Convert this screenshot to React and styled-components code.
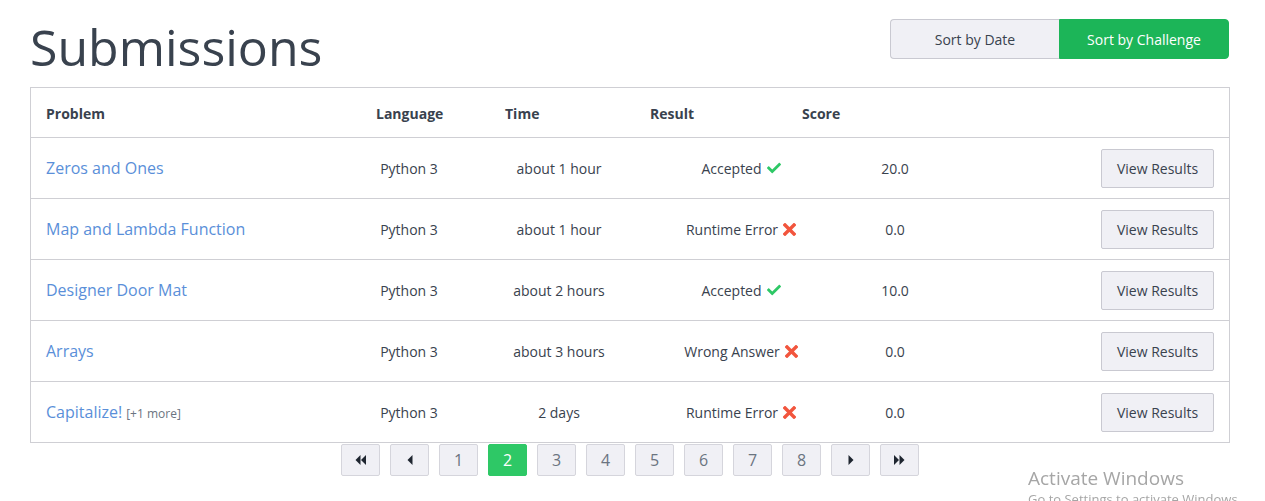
import React from 'react';
import styled, { createGlobalStyle } from 'styled-components';
import { FaCheck } from 'react-icons/fa';

const GlobalStyle = createGlobalStyle`
  html, body {
    margin: 0;
    padding: 0;
    background: #fff;
    font-family: "Open Sans", "Liberation Sans", sans-serif;
    color: #39424e;
  }
`;

const Page = styled.div`
  width: 1200px;
  margin-left: 30px;
`;

const TopBar = styled.div`
  display: flex;
  justify-content: space-between;
  align-items: flex-start;
  height: 87px;
`;

const Title = styled.h1`
  margin: 17px 0 0 0;
  font-size: 50px;
  font-weight: 400;
  line-height: 1.2;
  color: #39424e;
`;

const SortGroup = styled.div`
  display: flex;
  margin-top: 19px;
  margin-right: 1px;
`;

const SortButton = styled.button`
  width: ${p => (p.active ? '170px' : '169px')};
  height: 40px;
  font-family: inherit;
  font-size: 14px;
  border: 1px solid ${p => (p.active ? '#1cb558' : '#c9c9d1')};
  background: ${p => (p.active ? '#1cb558' : '#f0f0f5')};
  color: ${p => (p.active ? '#fff' : '#39424e')};
  border-radius: ${p => (p.active ? '0 4px 4px 0' : '4px 0 0 4px')};
  border-right: ${p => (p.active ? '1px solid #1cb558' : 'none')};
  cursor: pointer;
`;

const Table = styled.div`
  border: 1px solid #cfcfd4;
`;

const HeaderRow = styled.div`
  display: grid;
  grid-template-columns: 330px 129px 145px 152px 1fr;
  align-items: center;
  height: 49px;
  padding: 2px 0 0 15px;
  box-sizing: border-box;
  font-size: 14px;
  font-weight: 700;
  color: #39424e;
`;

const Row = styled.div`
  display: grid;
  grid-template-columns: 304px 118px 182px 182px 126px 1fr;
  align-items: center;
  height: 60px;
  padding: 0 15px;
  border-top: 1px solid #cfcfd4;
  font-size: 14px;
  color: #39424e;
`;

const Cell = styled.div`
  text-align: center;
  display: flex;
  justify-content: center;
  align-items: center;
  gap: 5px;
`;

const ProblemLink = styled.a`
  font-size: 16px;
  color: #5a8fd9;
  text-decoration: none;
  cursor: pointer;
`;

const More = styled.span`
  font-size: 12px;
  color: #6b7480;
  margin-left: 4px;
`;

const ActionCell = styled.div`
  display: flex;
  justify-content: flex-end;
`;

const ViewButton = styled.button`
  width: 113px;
  height: 39px;
  font-family: inherit;
  font-size: 14px;
  color: #39424e;
  background: #f0f0f5;
  border: 1px solid #c9c9d1;
  border-radius: 2px;
  cursor: pointer;
`;

const StatusIcon = styled.span`
  display: inline-flex;
  font-size: 14px;
  color: ${p => (p.ok ? '#2ec866' : '#f2553d')};
`;

const Pager = styled.div`
  display: flex;
  justify-content: center;
  gap: 10px;
  padding-top: 1px;
`;

const PageButton = styled.button`
  width: 39px;
  height: 32px;
  padding: 0;
  font-family: inherit;
  font-size: 16px;
  color: ${p => (p.active ? '#fff' : '#6b7480')};
  background: ${p => (p.active ? '#2ec866' : '#f0f0f5')};
  border: 1px solid ${p => (p.active ? '#2ec866' : '#d5d5dc')};
  border-radius: 2px;
  display: flex;
  align-items: center;
  justify-content: center;
  cursor: pointer;
`;

const Watermark = styled.div`
  position: fixed;
  left: 1028px;
  top: 466px;
  font-family: "Segoe UI", "Open Sans", sans-serif;
  color: #a6a6a6;
  pointer-events: none;
  line-height: 1.3;
  .big { font-size: 19px; }
  .small { font-size: 13px; white-space: nowrap; }
`;

const Cross = () => (
  <svg width="13" height="13" viewBox="0 0 13 13">
    <path d="M2 2 L11 11 M11 2 L2 11" stroke="currentColor" strokeWidth="3.4" strokeLinecap="square" />
  </svg>
);

const Arrow = ({ dir, double }) => {
  const tri = x =>
    dir === 'left'
      ? `M${x} 0 L${x} 10 L${x - 5} 5 Z`
      : `M${x} 0 L${x} 10 L${x + 5} 5 Z`;
  const w = double ? 11 : 6;
  return (
    <svg width={w} height="10" viewBox={`0 0 ${w} 10`} fill="#1f2630">
      {double ? (
        dir === 'left' ? (
          <>
            <path d={tri(5.5)} />
            <path d={tri(11)} />
          </>
        ) : (
          <>
            <path d={tri(0)} />
            <path d={tri(5.5)} />
          </>
        )
      ) : dir === 'left' ? (
        <path d={tri(5.5)} />
      ) : (
        <path d={tri(0.5)} />
      )}
    </svg>
  );
};

const submissions = [
  { name: 'Zeros and Ones', time: 'about 1 hour', result: 'Accepted', ok: true, score: '20.0' },
  { name: 'Map and Lambda Function', time: 'about 1 hour', result: 'Runtime Error', ok: false, score: '0.0' },
  { name: 'Designer Door Mat', time: 'about 2 hours', result: 'Accepted', ok: true, score: '10.0' },
  { name: 'Arrays', time: 'about 3 hours', result: 'Wrong Answer', ok: false, score: '0.0' },
  { name: 'Capitalize!', more: '[+1 more]', time: '2 days', result: 'Runtime Error', ok: false, score: '0.0' },
];

export default function App() {
  return (
    <>
      <GlobalStyle />
      <Page>
        <TopBar>
          <Title>Submissions</Title>
          <SortGroup>
            <SortButton>Sort by Date</SortButton>
            <SortButton active>Sort by Challenge</SortButton>
          </SortGroup>
        </TopBar>
        <Table>
          <HeaderRow>
            <div>Problem</div>
            <div>Language</div>
            <div>Time</div>
            <div>Result</div>
            <div>Score</div>
          </HeaderRow>
          {submissions.map(s => (
            <Row key={s.name}>
              <div>
                <ProblemLink>{s.name}</ProblemLink>
                {s.more && <More>{s.more}</More>}
              </div>
              <Cell>Python 3</Cell>
              <Cell>{s.time}</Cell>
              <Cell>
                {s.result}
                <StatusIcon ok={s.ok}>{s.ok ? <FaCheck /> : <Cross />}</StatusIcon>
              </Cell>
              <Cell>{s.score}</Cell>
              <ActionCell>
                <ViewButton>View Results</ViewButton>
              </ActionCell>
            </Row>
          ))}
        </Table>
        <Pager>
          <PageButton><Arrow dir="left" double /></PageButton>
          <PageButton><Arrow dir="left" /></PageButton>
          {[1, 2, 3, 4, 5, 6, 7, 8].map(n => (
            <PageButton key={n} active={n === 2}>{n}</PageButton>
          ))}
          <PageButton><Arrow dir="right" /></PageButton>
          <PageButton><Arrow dir="right" double /></PageButton>
        </Pager>
      </Page>
      <Watermark>
        <div className="big">Activate Windows</div>
        <div className="small">Go to Settings to activate Windows.</div>
      </Watermark>
    </>
  );
}
